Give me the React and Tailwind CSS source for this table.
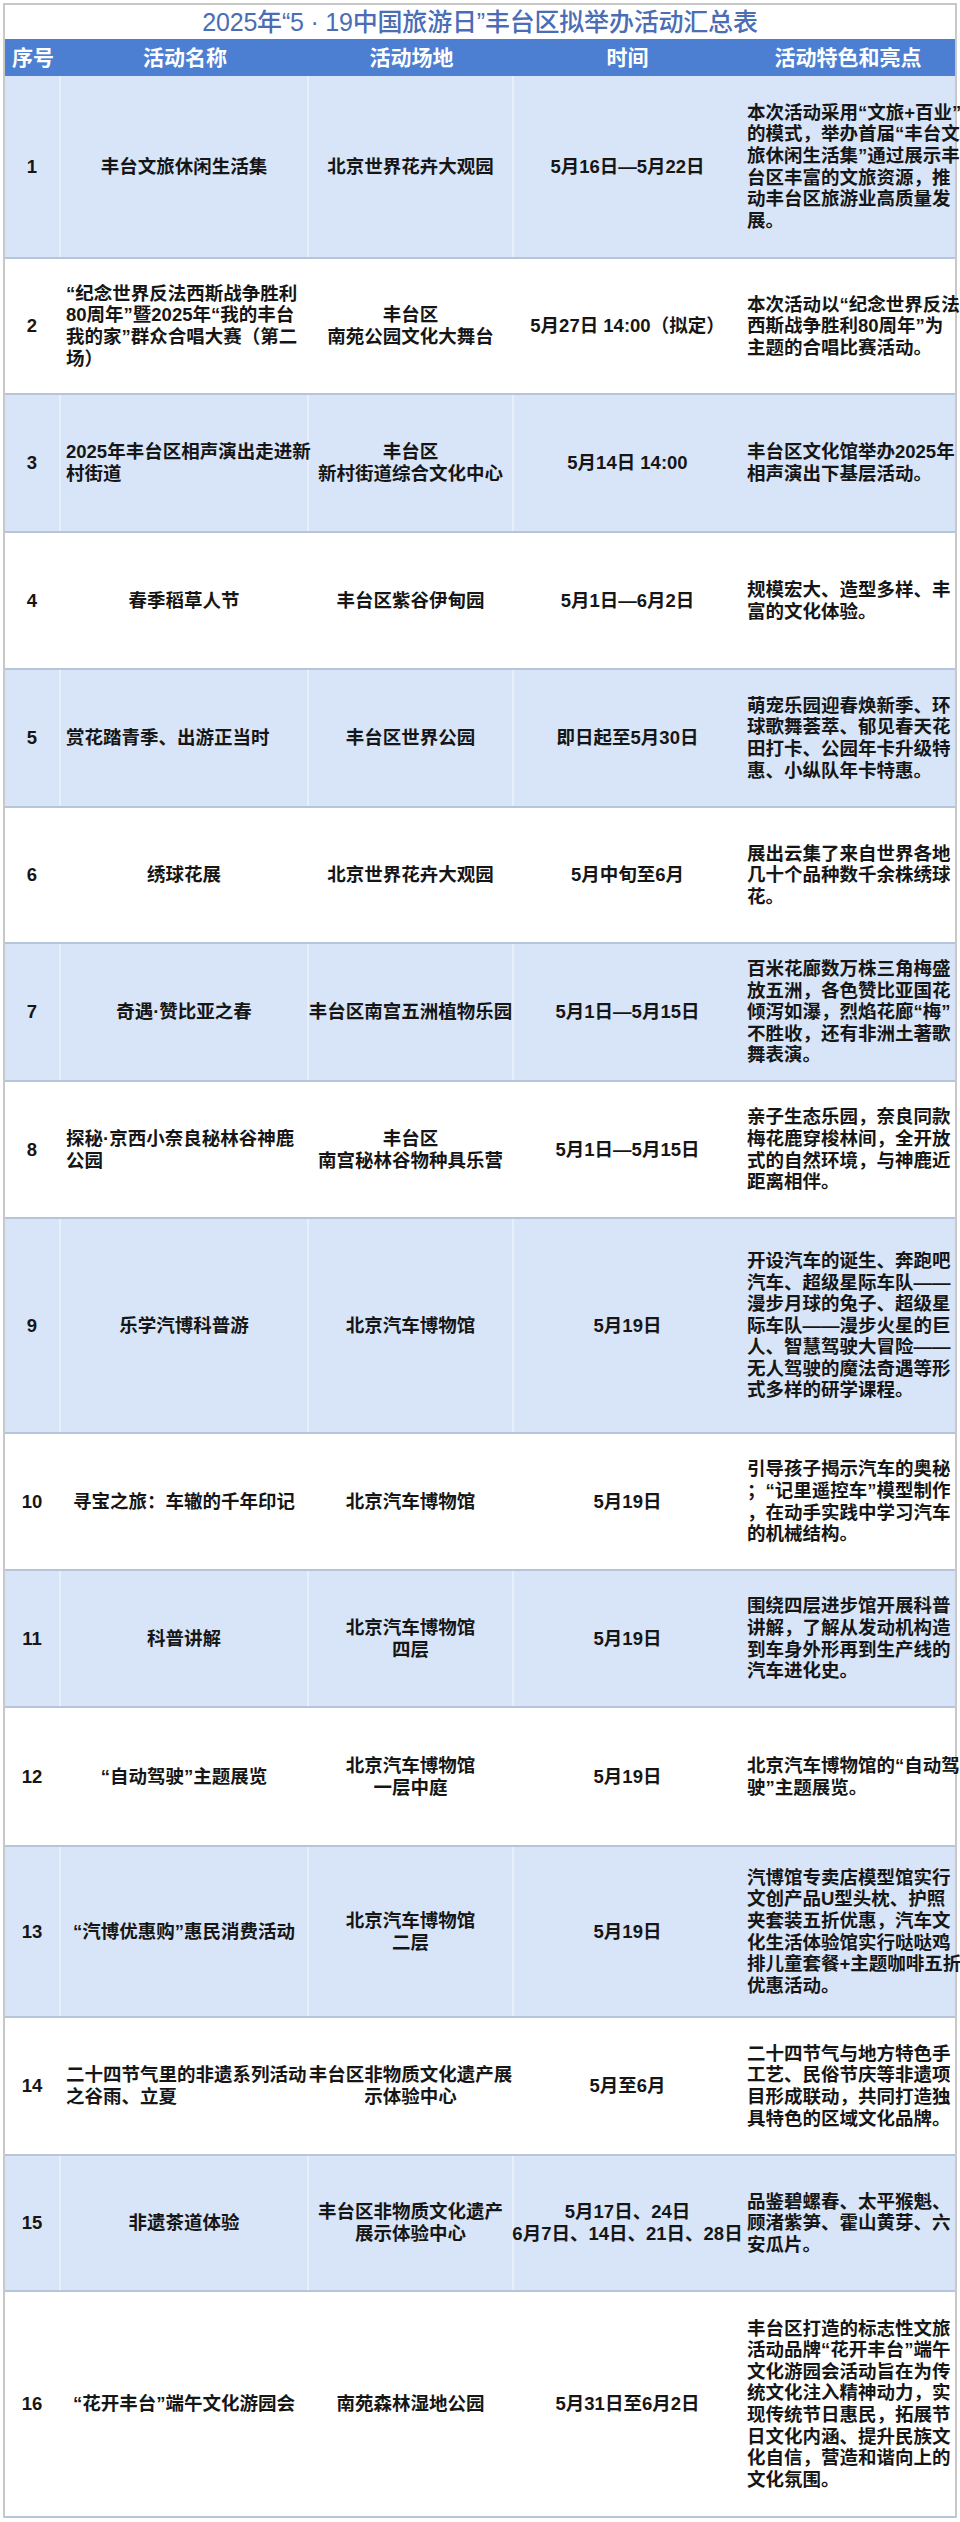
import React from 'react';

const rows = [
  { n: '1', h: 'h-[183px]', name: ['丰台文旅休闲生活集'], venue: ['北京世界花卉大观园'], time: ['5月16日—5月22日'], feat: ['本次活动采用“文旅+百业”', '的模式，举办首届“丰台文', '旅休闲生活集”通过展示丰', '台区丰富的文旅资源，推', '动丰台区旅游业高质量发', '展。'] },
  { n: '2', h: 'h-[136px]', left: true, name: ['“纪念世界反法西斯战争胜利', '80周年”暨2025年“我的丰台', '我的家”群众合唱大赛（第二', '场）'], venue: ['丰台区', '南苑公园文化大舞台'], time: ['5月27日 14:00（拟定）'], feat: ['本次活动以“纪念世界反法', '西斯战争胜利80周年”为', '主题的合唱比赛活动。'] },
  { n: '3', h: 'h-[138px]', left: true, name: ['2025年丰台区相声演出走进新', '村街道'], venue: ['丰台区', '新村街道综合文化中心'], time: ['5月14日 14:00'], feat: ['丰台区文化馆举办2025年', '相声演出下基层活动。'] },
  { n: '4', h: 'h-[137px]', name: ['春季稻草人节'], venue: ['丰台区紫谷伊甸园'], time: ['5月1日—6月2日'], feat: ['规模宏大、造型多样、丰', '富的文化体验。'] },
  { n: '5', h: 'h-[138px]', left: true, name: ['赏花踏青季、出游正当时'], venue: ['丰台区世界公园'], time: ['即日起至5月30日'], feat: ['萌宠乐园迎春焕新季、环', '球歌舞荟萃、郁见春天花', '田打卡、公园年卡升级特', '惠、小纵队年卡特惠。'] },
  { n: '6', h: 'h-[136px]', name: ['绣球花展'], venue: ['北京世界花卉大观园'], time: ['5月中旬至6月'], feat: ['展出云集了来自世界各地', '几十个品种数千余株绣球', '花。'] },
  { n: '7', h: 'h-[138px]', name: ['奇遇·赞比亚之春'], venue: ['丰台区南宫五洲植物乐园'], time: ['5月1日—5月15日'], feat: ['百米花廊数万株三角梅盛', '放五洲，各色赞比亚国花', '倾泻如瀑，烈焰花廊“梅”', '不胜收，还有非洲土著歌', '舞表演。'] },
  { n: '8', h: 'h-[137px]', left: true, name: ['探秘·京西小奈良秘林谷神鹿', '公园'], venue: ['丰台区', '南宫秘林谷物种具乐营'], time: ['5月1日—5月15日'], feat: ['亲子生态乐园，奈良同款', '梅花鹿穿梭林间，全开放', '式的自然环境，与神鹿近', '距离相伴。'] },
  { n: '9', h: 'h-[215px]', name: ['乐学汽博科普游'], venue: ['北京汽车博物馆'], time: ['5月19日'], feat: ['开设汽车的诞生、奔跑吧', '汽车、超级星际车队——', '漫步月球的兔子、超级星', '际车队——漫步火星的巨', '人、智慧驾驶大冒险——', '无人驾驶的魔法奇遇等形', '式多样的研学课程。'] },
  { n: '10', h: 'h-[137px]', name: ['寻宝之旅：车辙的千年印记'], venue: ['北京汽车博物馆'], time: ['5月19日'], feat: ['引导孩子揭示汽车的奥秘', '；“记里遥控车”模型制作', '，在动手实践中学习汽车', '的机械结构。'] },
  { n: '11', h: 'h-[137px]', name: ['科普讲解'], venue: ['北京汽车博物馆', '四层'], time: ['5月19日'], feat: ['围绕四层进步馆开展科普', '讲解，了解从发动机构造', '到车身外形再到生产线的', '汽车进化史。'] },
  { n: '12', h: 'h-[139px]', name: ['“自动驾驶”主题展览'], venue: ['北京汽车博物馆', '一层中庭'], time: ['5月19日'], feat: ['北京汽车博物馆的“自动驾', '驶”主题展览。'] },
  { n: '13', h: 'h-[171px]', name: ['“汽博优惠购”惠民消费活动'], venue: ['北京汽车博物馆', '二层'], time: ['5月19日'], feat: ['汽博馆专卖店模型馆实行', '文创产品U型头枕、护照', '夹套装五折优惠，汽车文', '化生活体验馆实行哒哒鸡', '排儿童套餐+主题咖啡五折', '优惠活动。'] },
  { n: '14', h: 'h-[138px]', left: true, name: ['二十四节气里的非遗系列活动', '之谷雨、立夏'], venue: ['丰台区非物质文化遗产展', '示体验中心'], time: ['5月至6月'], feat: ['二十四节气与地方特色手', '工艺、民俗节庆等非遗项', '目形成联动，共同打造独', '具特色的区域文化品牌。'] },
  { n: '15', h: 'h-[136px]', name: ['非遗茶道体验'], venue: ['丰台区非物质文化遗产', '展示体验中心'], time: ['5月17日、24日', '6月7日、14日、21日、28日'], feat: ['品鉴碧螺春、太平猴魁、', '顾渚紫笋、霍山黄芽、六', '安瓜片。'] },
  { n: '16', h: 'h-[226px]', name: ['“花开丰台”端午文化游园会'], venue: ['南苑森林湿地公园'], time: ['5月31日至6月2日'], feat: ['丰台区打造的标志性文旅', '活动品牌“花开丰台”端午', '文化游园会活动旨在为传', '统文化注入精神动力，实', '现传统节日惠民，拓展节', '日文化内涵、提升民族文', '化自信，营造和谐向上的', '文化氛围。'] },
];

function Lines({ lines, align }) {
  return (
    <div className={align}>
      {lines.map((l, i) => (
        <div key={i} className="whitespace-nowrap">{l}</div>
      ))}
    </div>
  );
}

export default function App() {
  return (
    <div className="w-[960px] min-h-[2522px] bg-white pt-[3px] px-[3px] font-['Liberation_Sans','Noto_Sans_CJK_SC',sans-serif]">
      <div className="border-2 border-[#c8c8c8] border-b-0">
        <div className="h-[34px] flex items-center justify-center text-[25px] font-medium text-[#4a6db5] leading-none tracking-[-0.2px]">
          2025年“5 · 19中国旅游日”丰台区拟举办活动汇总表
        </div>
        <div className="h-[37px] bg-[#4c7fd2] grid grid-cols-[56px_248px_205px_227px_214px] text-white font-bold text-[21px] leading-none">
          <div className="flex items-center justify-center">序号</div>
          <div className="flex items-center justify-center">活动名称</div>
          <div className="flex items-center justify-center">活动场地</div>
          <div className="flex items-center justify-center">时间</div>
          <div className="flex items-center justify-center">活动特色和亮点</div>
        </div>
        {rows.map((r, i) => (
          <div
            key={r.n}
            className={`${r.h} ${i % 2 === 0 ? 'bg-[#d8e5f8]' : 'bg-white'} grid grid-cols-[56px_248px_205px_227px_214px] border-b-2 border-[#b6c5d9] text-[18.5px] leading-[21.6px] font-bold text-[#161616]`}
          >
            <div className="flex items-center justify-center border-r-2 border-white/40">{r.n}</div>
            <div className={`flex items-center border-r-2 border-white/40 ${r.left ? 'justify-start pl-[5px]' : 'justify-center'}`}>
              <Lines lines={r.name} align={r.left ? 'text-left' : 'text-center'} />
            </div>
            <div className="flex items-center justify-center border-r-2 border-white/40">
              <Lines lines={r.venue} align="text-center" />
            </div>
            <div className="flex items-center justify-center">
              <Lines lines={r.time} align="text-center" />
            </div>
            <div className="flex items-center justify-start pl-[6px]">
              <Lines lines={r.feat} align="text-left" />
            </div>
          </div>
        ))}
      </div>
    </div>
  );
}
